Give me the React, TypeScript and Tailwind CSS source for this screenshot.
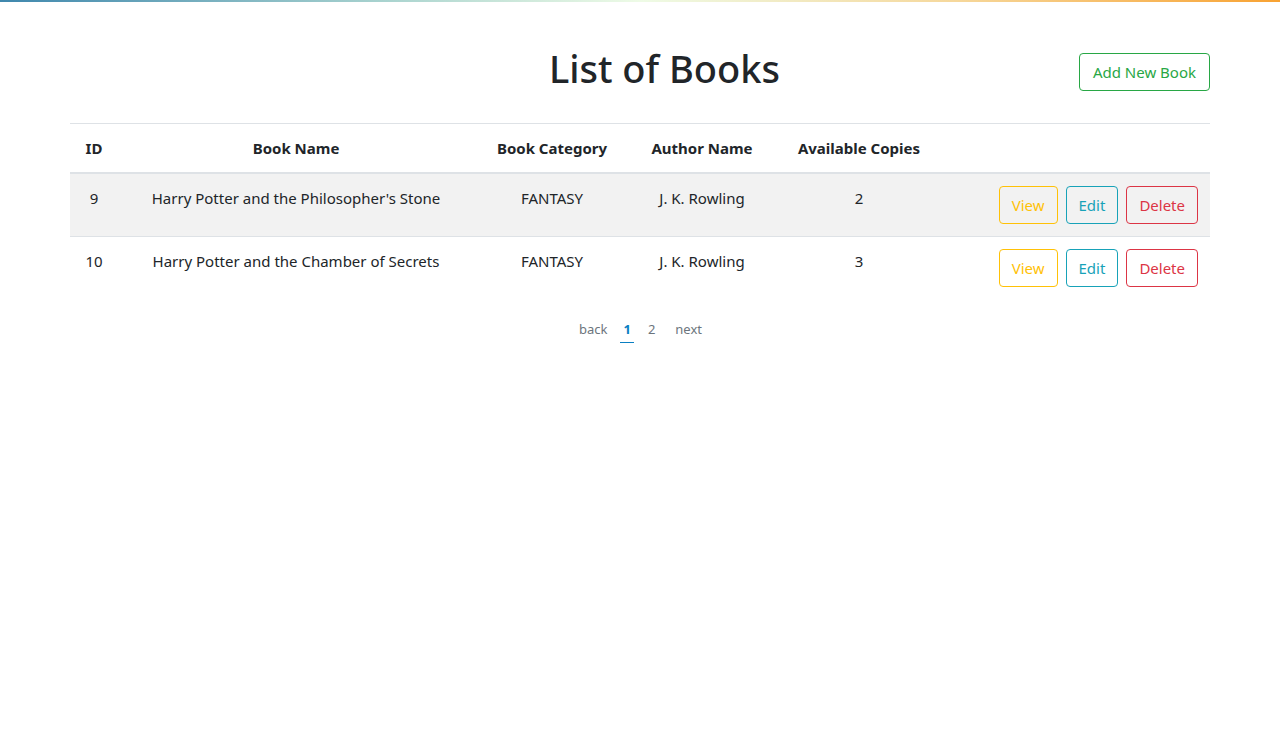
import React from 'react';

interface Book {
  id: number;
  name: string;
  category: string;
  author: string;
  copies: number;
}

const books: Book[] = [
  { id: 9, name: "Harry Potter and the Philosopher's Stone", category: 'FANTASY', author: 'J. K. Rowling', copies: 2 },
  { id: 10, name: 'Harry Potter and the Chamber of Secrets', category: 'FANTASY', author: 'J. K. Rowling', copies: 3 },
];

const btn = 'h-[38px] px-3 border rounded text-[15px] leading-6 bg-transparent';

export default function App() {
  return (
    <div className="min-h-[740px] bg-white text-[#212529] text-[15px] font-['Noto_Sans',sans-serif]">
      {/* top accent line */}
      <div className="h-[2px] bg-[linear-gradient(90deg,#3f87ad_0%,#a9d3cf_30%,#eefbe6_50%,#f6d79a_75%,#f8a232_100%)]" />

      <div className="w-[1140px] mx-auto pt-[42px]">
        {/* Header */}
        <div className="flex items-start">
          <div className="flex-1 pl-[180px] text-center">
            <h1 className="text-[38px] leading-[48px] font-medium">List of Books</h1>
          </div>
          <button className={`${btn} mt-[9px] px-[13px] border-[#28a745] text-[#28a745]`}>Add New Book</button>
        </div>

        {/* Table */}
        <table className="w-full table-fixed border-collapse mt-[31px]">
          <colgroup>
            <col className="w-[48px]" />
            <col className="w-[356px]" />
            <col className="w-[156px]" />
            <col className="w-[144px]" />
            <col className="w-[170px]" />
            <col className="w-[266px]" />
          </colgroup>
          <thead>
            <tr className="text-center font-bold">
              <th className="p-3 leading-6 border-t border-b-2 border-[#dee2e6]">ID</th>
              <th className="p-3 leading-6 border-t border-b-2 border-[#dee2e6]">Book Name</th>
              <th className="p-3 leading-6 border-t border-b-2 border-[#dee2e6]">Book Category</th>
              <th className="p-3 leading-6 border-t border-b-2 border-[#dee2e6]">Author Name</th>
              <th className="p-3 leading-6 border-t border-b-2 border-[#dee2e6]">Available Copies</th>
              <th className="p-3 leading-6 border-t border-b-2 border-[#dee2e6]"></th>
            </tr>
          </thead>
          <tbody>
            {books.map((b, i) => (
              <tr key={b.id} className={i % 2 === 0 ? 'bg-[#f2f2f2]' : ''}>
                <td className="p-3 leading-6 align-top text-center border-t border-[#dee2e6]">{b.id}</td>
                <td className="p-3 leading-6 align-top text-center border-t border-[#dee2e6]">{b.name}</td>
                <td className="p-3 leading-6 align-top text-center border-t border-[#dee2e6]">{b.category}</td>
                <td className="p-3 leading-6 align-top text-center border-t border-[#dee2e6]">{b.author}</td>
                <td className="p-3 leading-6 align-top text-center border-t border-[#dee2e6]">{b.copies}</td>
                <td className="p-3 align-top border-t border-[#dee2e6]">
                  <div className="flex justify-end gap-2">
                    <button className={`${btn} border-[#ffc107] text-[#ffc107]`}>View</button>
                    <button className={`${btn} border-[#17a2b8] text-[#17a2b8]`}>Edit</button>
                    <button className={`${btn} border-[#dc3545] text-[#dc3545]`}>Delete</button>
                  </div>
                </td>
              </tr>
            ))}
          </tbody>
        </table>

        {/* Pagination */}
        <div className="flex justify-center items-start mt-[20px] pl-[1px] text-[13px] leading-5 text-[#6c757d]">
          <span>back</span>
          <span className="ml-[13px] px-[3px] pb-[3px] font-bold text-[#0a7fc2] border-b border-[#0a7fc2]">1</span>
          <span className="ml-[14px]">2</span>
          <span className="ml-[20px]">next</span>
        </div>
      </div>
    </div>
  );
}
